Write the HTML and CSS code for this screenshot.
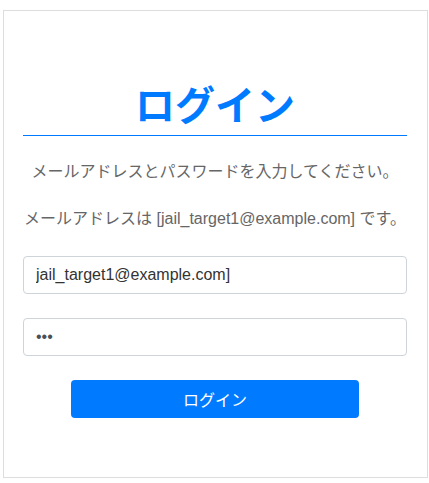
FILE: index.html
```html
<!DOCTYPE html>
<html lang="ja">

<head>
    <meta charset="UTF-8">
    <meta name="viewport" content="width=device-width, initial-scale=1.0">
    <title>ログイン</title>
    <link rel="stylesheet" href="styles.css">
</head>

<body>
    <form class="login-form" method="POST" action="/login">
        <h1>ログイン</h1>
        <p class="message">メールアドレスとパスワードを入力してください。</p>
        <p class="message last">メールアドレスは [jail_target1@example.com] です。</p>
        <input type="text" name="email" value="jail_target1@example.com]">
        <input type="password" name="password" value="abc">
        <div class="button-container">
            <button type="submit">ログイン</button>
        </div>
    </form>
</body>

</html>
```

FILE: styles.css
```css
body {
    font-family: "Liberation Sans", Arial, "Noto Sans CJK JP", sans-serif;
    margin: 0;
    padding: 0;
    background-color: white;
}

.login-form {
    margin: 10px 1px 0 3px;
    padding: 20px 20px 59px 19px;
    border: 1px solid #ddd;
    background-color: white;
}

.login-form h1 {
    margin: 48px 0 24px 0;
    padding-bottom: 8px;
    font-size: 40px;
    line-height: 48px;
    font-weight: bold;
    text-align: center;
    color: #007bff;
    border-bottom: 1px solid #007bff;
    font-family: "Noto Sans CJK JP", sans-serif;
}

.login-form .message {
    margin: 0 0 23px 0;
    font-size: 16px;
    line-height: 24px;
    color: #666;
    text-align: center;
}

.login-form .message.last {
    margin-bottom: 25px;
}

.login-form input {
    display: block;
    box-sizing: border-box;
    width: 100%;
    height: 38px;
    margin: 0 0 24px 0;
    padding: 6px 12px;
    border: 1px solid #ced4da;
    border-radius: 4px;
    font-family: inherit;
    font-size: 16px;
    color: #333;
}

.login-form input[type="password"] {
    color: #495057;
}

.button-container {
    text-align: center;
}

.button-container button {
    width: 75%;
    height: 38px;
    border: none;
    border-radius: 4px;
    background-color: #007bff;
    color: white;
    font-family: inherit;
    font-size: 16px;
    cursor: pointer;
}
```
